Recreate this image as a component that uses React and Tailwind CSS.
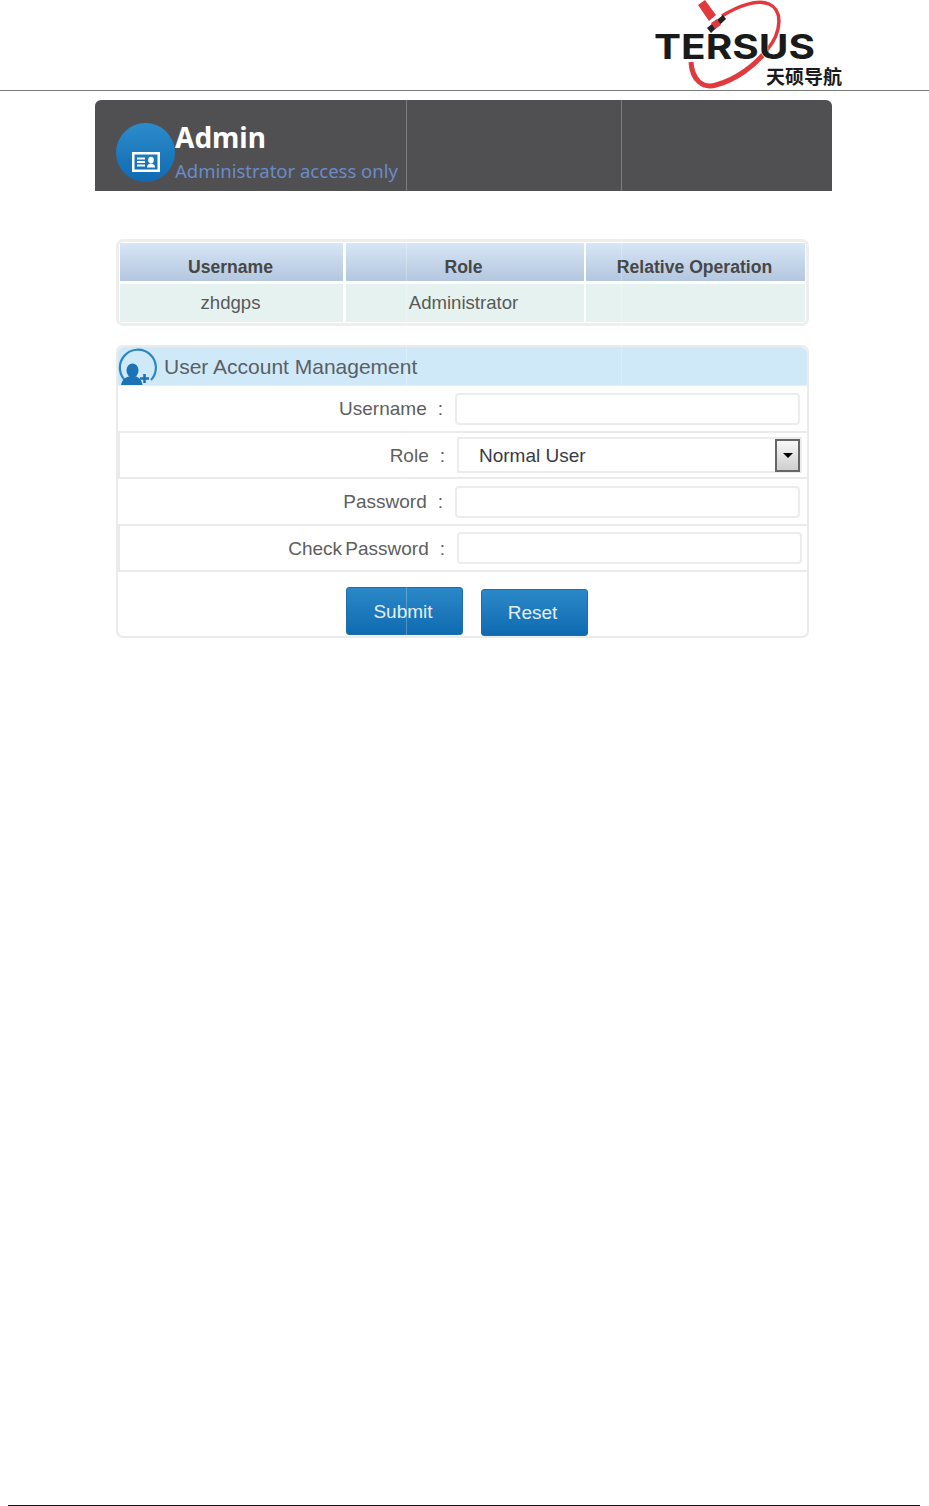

const arial = { fontFamily: '"Liberation Sans", Arial, sans-serif' };

function Logo() {
  return (
    <svg width="200" height="91" viewBox="650 0 200 91" className="block">
      <path d="M722 16 C738 6 757 -1 769 4 C783 10 782 32 767 50" fill="none" stroke="#e03a3e" strokeWidth="3.5" />
      <path d="M691 62 C692 80 703 89 716 85 C735 80 755 66 767 50" fill="none" stroke="#e03a3e" strokeWidth="5" />
      <path d="M698 5 L705 0 L716 15 L709 21 Z" fill="#e03a3e" />
      <path d="M707 28 L723 15 L726 19 L711 33 Z" fill="#222" />
      <path d="M711 23 L717 19 L721 25 L715 29 Z" fill="#e03a3e" />
      <text x="654" y="59" fontFamily="Inter, sans-serif" fontWeight="700" fontSize="34" textLength="161" lengthAdjust="spacingAndGlyphs" fill="#1a1a1a" stroke="#fff" strokeWidth="1" paintOrder="stroke">TERSUS</text>
      <text x="766" y="84" fontFamily="Noto Sans CJK SC, sans-serif" fontWeight="700" fontSize="19" textLength="76" fill="#1a1a1a">天硕导航</text>
    </svg>
  );
}

function CardIcon() {
  return (
    <svg width="28" height="20" viewBox="0 0 28 20" fill="none">
      <rect x="1.25" y="1.25" width="25.5" height="17.5" fill="none" stroke="#fff" strokeWidth="2.5" />
      <path d="M5 6.5h8M5 10h8M5 13.5h8" stroke="#fff" strokeWidth="2" />
      <ellipse cx="19" cy="8" rx="2.8" ry="3.2" fill="#fff" />
      <path d="M15 15.5c0-3 2-4 4-4s4 1 4 4z" fill="#fff" />
    </svg>
  );
}

function UserPlus() {
  return (
    <svg width="40" height="40" viewBox="0 0 40 40" fill="none">
      <path d="M9 36 A18 18 0 1 1 33 34" stroke="#2a86c4" strokeWidth="2.2" fill="none" />
      <ellipse cx="14.5" cy="24.5" rx="6" ry="7" fill="#1b72b4" />
      <path d="M3 39c1-6 6-9 11.500-9s9 3 10 9z" fill="#1b72b4" />
      <path d="M26.500 28v9M22 32.500h9" stroke="#1b72b4" strokeWidth="2.6" />
    </svg>
  );
}

function Th({ children }) {
  return (
    <div className="flex h-[38px] items-center justify-center bg-gradient-to-b from-[#d8e6f5] to-[#b3c7df] pt-[10px] pr-[2px] text-[17.6px] font-bold text-[#474747]">
      {children}
    </div>
  );
}

function Td({ children }) {
  return (
    <div className="flex h-[38px] items-center justify-center bg-[#e6f2f0] pr-[2px] text-[18.6px] text-[#595959]">
      {children}
    </div>
  );
}

function Row({ label, shifted, height, children }) {
  return (
    <div className={`flex items-center border-b-2 border-[#ebebeb] ${height} ${shifted ? 'border-l-2' : ''}`}>
      <div className="flex w-[337px] shrink-0 justify-end pr-[12px] pt-[2px] text-[19px] text-[#5e5e5e]">
        <span className="[word-spacing:-2px]">{label}</span>
        <span className="ml-[11px]">:</span>
      </div>
      {children}
    </div>
  );
}

function Field() {
  return (
    <input
      type="text"
      aria-label="field"
      className="h-[32px] w-[345px] rounded-[4px] border-2 border-[#ececec] bg-white outline-none"
    />
  );
}

export default function App() {
  return (
    <div style={arial} className="relative flex h-[1506px] w-[929px] flex-col overflow-hidden bg-white">
      <header className="flex h-[91px] justify-end border-b border-[#7d7d7d] pr-[79px]">
        <Logo />
      </header>

      <section className="ml-[95px] mt-[9px] flex h-[91px] w-[737px] rounded-t-[6px] bg-[#505052] pl-[21px]">
        <div className="mt-[23px] flex h-[59px] w-[59px] shrink-0 items-end justify-center rounded-full bg-gradient-to-b from-[#2c8ccb] to-[#0f6ab2] pb-[10px]">
          <CardIcon />
        </div>
        <div className="pt-[17px]" style={{ fontFamily: '"Noto Sans", sans-serif' }}>
          <div className="text-[28px] font-bold leading-[41px] text-white">Admin</div>
          <div className="text-[18.5px] leading-[26px] text-[#6b8bc9]">Administrator access only</div>
        </div>
      </section>

      <section className="ml-[116px] mt-[48px] w-[693px] rounded-[7px] border-[3px] border-[#eeeeee] p-px">
        <div className="grid grid-cols-[223px_238px_219px] gap-x-[2.5px] gap-y-[3px]">
          <Th>Username</Th>
          <Th>Role</Th>
          <Th>Relative Operation</Th>
          <Td>zhdgps</Td>
          <Td>Administrator</Td>
          <Td />
        </div>
      </section>

      <section className="ml-[116px] mt-[19px] w-[693px] rounded-[7px] border-2 border-[#ebebeb]">
        <div className="flex h-[39px] items-center rounded-t-[6px] border-b border-[#e8eef2] bg-[#d0e9f8] text-[21px] text-[#5a5f66]">
          <div className="mr-[6px] shrink-0"><UserPlus /></div>
          <span className="pt-[2px]">User Account Management</span>
        </div>

        <Row label="Username" height="h-[47px]"><Field /></Row>
        <Row label="Role" shifted height="h-[46px]">
          <div className="flex h-[36px] w-[345px] items-center justify-between border-2 border-[#ececec] pl-[20px] text-[19px] text-[#3a3a46]">
            <span className="pt-[2px]">Normal User</span>
            <span className="flex h-[33px] w-[25px] items-center justify-center border-2 border-[#666] bg-gradient-to-b from-[#f8f8f8] to-[#cfcfcf]">
              <span className="h-0 w-0 border-x-[5px] border-t-[5px] border-x-transparent border-t-black" />
            </span>
          </div>
        </Row>
        <Row label="Password" height="h-[47px]"><Field /></Row>
        <Row label="Check Password" shifted height="h-[46px]"><Field /></Row>

        <div className="flex h-[64px] items-start pl-[228px] pt-[15px] text-[19px] text-[#e4eef6]">
          <button className="h-[48px] w-[117px] rounded-[3px] border border-[#1b6fa8] bg-gradient-to-b from-[#2a88c8] to-[#0f6bb1] pr-[3px] pt-[2px]" type="button">Submit</button>
          <button className="ml-[18px] mt-[2px] h-[47px] w-[107px] rounded-[3px] border border-[#1b6fa8] bg-gradient-to-b from-[#2a88c8] to-[#0f6bb1] pr-[4px] pt-[1px]" type="button">Reset</button>
        </div>
      </section>

      <div className="mx-[8px] mt-auto h-[1.5px] w-[912px] bg-[#111]" />

      <div className="absolute left-[406px] top-[100px] h-[536px] w-px bg-white/25" />
      <div className="absolute left-[621px] top-[100px] h-[286px] w-px bg-white/25" />
    </div>
  );
}
